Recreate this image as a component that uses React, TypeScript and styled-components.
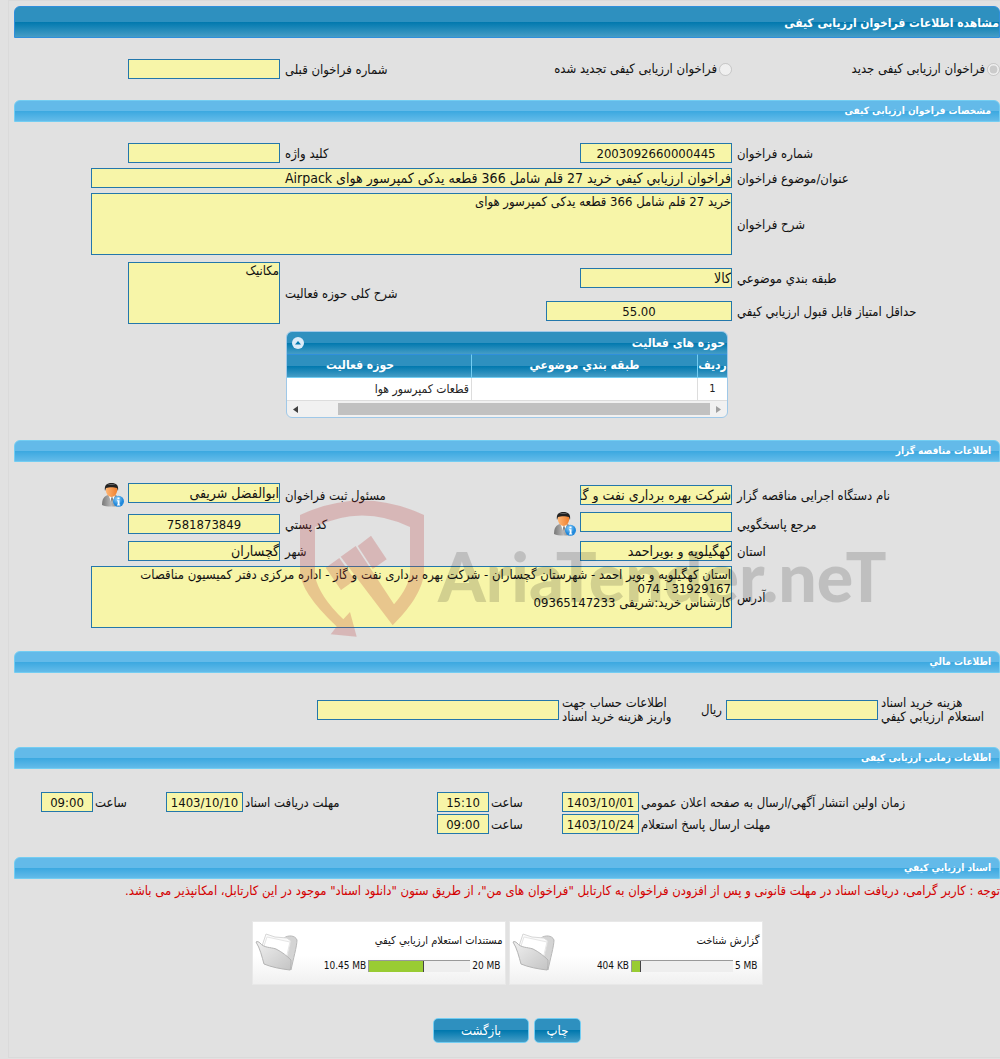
import React, { useId } from "react";
import styled, { createGlobalStyle, css } from "styled-components";

const font = `"DejaVu Sans Condensed", "DejaVu Sans", Tahoma, sans-serif`;
const darkBar = "linear-gradient(#2e90bf 0 50%, #0078ae 50%, #459dc6 100%)";
const lightBar = "linear-gradient(#63bae9 0 50%, #3ba8e0 50%, #63bbe9 100%)";

const Global = createGlobalStyle`
  *, *::before, *::after { box-sizing: border-box; }
  body { margin: 0; background: #e1e1e1; overflow-x: hidden; }
  body, input, textarea, button, table { font-family: ${font}; color: #111; }
`;

const Page = styled.main`
  direction: rtl;
  margin-left: 8px;
  padding: 5px 0 14px 5px;
  border: solid #dadada;
  border-width: 1px 0 1px 1px;
  font-size: 13px;
  line-height: 14px;
`;

const PageTitle = styled.h1`
  margin: 0;
  height: 32px;
  border: 1px solid #2f8fdc;
  border-radius: 6px 6px 0 0;
  background: ${darkBar};
  color: #fff;
  font-size: 12px;
  line-height: 32px;
`;

const SectionTitle = styled.h2`
  margin: 0;
  height: 22px;
  padding: 0 8px;
  border: 1px solid #73cdf2;
  border-radius: 6px 6px 0 0;
  background: ${lightBar};
  color: #fff;
  font-size: 10px;
  line-height: 20px;
`;

const Body = styled.section<{ $top: number; $bottom: number }>`
  position: relative;
  display: flex;
  flex-direction: column;
  gap: 5px;
  padding: ${(p) => p.$top}px 0 ${(p) => p.$bottom}px;
`;

const FormGrid = styled.div`
  display: grid;
  grid-template-columns: 268fr 152fr 300fr 152fr 114fr;
  gap: 5px 0;
  align-items: center;
`;

const MixedGrid = styled(FormGrid)`
  grid-template-rows: 31px 26px;
  margin: 2px 0;
`;

const WideGrid = styled(FormGrid)`
  grid-template-columns: 268fr 641fr 77fr;
`;

const FeeGrid = styled(FormGrid)`
  grid-template-columns: 122fr 152fr 42fr 125fr 242fr 303fr;
`;

const TimeGrid = styled(FormGrid)`
  grid-template-columns: 361fr 77fr 73fr 52fr 194fr 77fr 73fr 52fr 27fr;
  row-gap: 2px;
`;

const Label = styled.label<{ $col?: number; $gap?: number; $row?: string }>`
  grid-column: ${(p) => p.$col ?? 1};
  grid-row: ${(p) => p.$row ?? "auto"};
  padding-top: 2px;
  padding-left: ${(p) => p.$gap ?? 5}px;
  text-align: left;
  white-space: nowrap;
`;

const TwoLineLabel = styled(Label)`
  padding-top: 0;
  white-space: pre-line;
`;

const Unit = styled.span`
  padding-right: 4px;
`;

const boxed = css`
  display: block;
  width: 100%;
  margin: 0;
  border: 1px solid #2377ab;
  border-radius: 0;
  background: #f7f5a8;
  outline: 0;
`;

const TextBox = styled.input<{ $col?: string; $row?: string; $width?: number; $center?: boolean }>`
  ${boxed}
  grid-column: ${(p) => p.$col ?? "auto"};
  grid-row: ${(p) => p.$row ?? "auto"};
  ${(p) => p.$width && css`width: ${p.$width}px;`}
  height: 20px;
  padding: 0;
  font-size: ${(p) => (p.$center ? 13 : 14)}px;
  text-align: ${(p) => (p.$center ? "center" : "right")};
`;

const TextArea = styled.textarea<{ $col: string; $row?: string }>`
  ${boxed}
  grid-column: ${(p) => p.$col};
  grid-row: ${(p) => p.$row ?? "auto"};
  height: 62px;
  padding: 1px 0;
  font-size: 13px;
  line-height: 14px;
  resize: none;
  overflow: hidden;
`;

const Choice = styled.label<{ $col: number }>`
  grid-column: ${(p) => p.$col};
  display: flex;
  align-items: center;
  gap: 2px;
  min-width: 0;
  white-space: nowrap;
`;

const Radio = styled.input`
  flex: none;
  width: 13px;
  height: 13px;
  margin: 0;
`;

const PersonCell = styled.div<{ $col: number }>`
  grid-column: ${(p) => p.$col};
  position: relative;
  height: 24px;
`;

const PersonButton = styled.button`
  position: absolute;
  top: 0;
  right: calc(100% + 2px);
  width: 24px;
  height: 24px;
  padding: 0;
  border: 0;
  background: none;
`;

const Grid = styled.div`
  align-self: center;
  width: 442px;
  max-width: 100%;
  border: 1px solid #9fc8e8;
  border-radius: 6px;
  background: #f1f1f1;
  overflow: hidden;
`;

const GridTitle = styled.div`
  display: flex;
  align-items: center;
  justify-content: space-between;
  height: 22px;
  padding: 0 2px 0 5px;
  background: ${darkBar};
  color: #fff;
  font-size: 12px;
  font-weight: bold;
`;

const Collapse = styled.button`
  width: 12px;
  height: 12px;
  padding: 0;
  border: 0;
  border-radius: 50%;
  background: #dcebf8;
  line-height: 0;
`;

const TableClip = styled.div`
  overflow: hidden;
`;

const Table = styled.table`
  width: calc(100% + 38px);
  table-layout: fixed;
  border-collapse: separate;
  border-spacing: 0;
  font-size: 12px;
  th {
    height: 24px;
    padding: 0 0 2px;
    border-top: 1px solid #2f8fdc;
    border-bottom: 1px solid #73cdf2;
    background: ${darkBar};
    color: #fff;
  }
  th + th { border-right: 1px solid #73cdf2; }
  td {
    height: 23px;
    padding: 0 2px;
    border-bottom: 1px solid #ddd;
    background: #fff;
    color: #222;
  }
  td:first-child { font-size: 11px; text-align: center; }
  td + td { border-right: 1px solid #ddd; }
`;

const ScrollTrack = styled.div`
  display: flex;
  align-items: center;
  height: 16px;
  padding: 2px 0;
`;

const ScrollArrow = styled.svg`
  flex: 0 0 17px;
  height: 9px;
`;

const ScrollThumb = styled.div`
  flex: 0 1 372px;
  height: 12px;
  margin-left: auto;
  background: #c1c1c1;
`;

const Watermark = styled.svg`
  position: absolute;
  left: 286px;
  top: 38px;
  width: 610px;
  height: 140px;
  pointer-events: none;
`;

const Notice = styled.p`
  margin: 0;
  color: #d40000;
  line-height: 16px;
  white-space: nowrap;
`;

const Cards = styled.div`
  display: flex;
  justify-content: center;
  gap: 3px;
  padding-top: 17px;
`;

const Card = styled.article`
  display: flex;
  align-items: center;
  justify-content: space-between;
  width: 254px;
  height: 64px;
  padding: 0 2px;
  border: 1px solid #e8e8e8;
  background: linear-gradient(#fff 0 55%, #f0f0f0 100%);
`;

const CardText = styled.div`
  display: flex;
  flex-direction: column;
  gap: 12px;
  font-size: 11px;
`;

const Usage = styled.div`
  display: flex;
  align-items: center;
  gap: 2px;
  padding-right: 2px;
  font-size: 10px;
  line-height: 12px;
`;

const Meter = styled.div`
  direction: ltr;
  width: 102px;
  height: 12px;
  border: solid #999;
  border-width: 1px 0 0 1px;
  background: #eee;
`;

const Fill = styled.div`
  height: 100%;
  border-right: 1px solid #444;
  background: #99cc33;
`;

const Actions = styled.div`
  display: flex;
  justify-content: center;
  gap: 5px;
  padding-top: 33px;
`;

const Action = styled.button<{ $wide?: boolean }>`
  width: ${(p) => (p.$wide ? 96 : 47)}px;
  height: 25px;
  padding: 0;
  border: 1px solid #73cdf2;
  border-radius: 5px;
  background: ${darkBar};
  color: #fff;
  font-size: 13px;
`;

function PersonIcon() {
  return (
    <svg width="24" height="24" viewBox="0 0 24 24" aria-hidden="true">
      <defs>
        <linearGradient id="suit" x1="0" x2="1">
          <stop offset="0" stopColor="#777" />
          <stop offset="0.5" stopColor="#bbb" />
          <stop offset="1" stopColor="#555" />
        </linearGradient>
        <linearGradient id="face" x1="0" x2="1">
          <stop offset="0" stopColor="#ffb877" />
          <stop offset="1" stopColor="#f07f2c" />
        </linearGradient>
        <radialGradient id="info" cx="0.4" cy="0.3">
          <stop offset="0" stopColor="#8ed0fa" />
          <stop offset="1" stopColor="#2189dc" />
        </radialGradient>
      </defs>
      <path d="M0 22c0-6 2-9 6-10h7c4 1 6 4 6 10-4 2-15 2-19 0z" fill="url(#suit)" />
      <path d="M6.500 12l3.500 9 3-9z" fill="#fff" />
      <path d="M10 13l-1 3 1 6 1-6z" fill="#777" />
      <path d="M3.500 5c0 5 2.500 9 6 9s6-4 6-9c-2-3-10-3-12 0z" fill="url(#face)" />
      <path d="M3 8C2 2 5 0 9.500 0S17 2 16 8l-1-3c-3-1-8-1-11 0z" fill="#222" />
      <path d="M5 2c2-1.500 7-1.500 9 0-2-.5-7-.5-9 0z" fill="#777" />
      <circle cx="16.500" cy="18.300" r="5.500" fill="url(#info)" />
      <path d="M15.500 14.500h2v1.800h-2zM15 17.300h2.500v4.200h.7v1H15v-1h.7v-3.200H15z" fill="#fff" />
    </svg>
  );
}

function FolderIcon() {
  return (
    <svg width="44" height="40" viewBox="0 0 44 40" aria-hidden="true">
      <defs>
        <linearGradient id="folderFront" x1="0" y1="0" x2="1" y2="1">
          <stop offset="0" stopColor="#f0f0f0" />
          <stop offset="1" stopColor="#c4c4c4" />
        </linearGradient>
      </defs>
      <path d="M29 5c4-3 11-3 13 2 0 6-4 20-6 30l-4-3z" fill="#d4d4d4" stroke="#b8b8b8" />
      <path d="M7 13l4-12 9 3 12 1 4 3-4 18z" fill="#fafafa" stroke="#d8d8d8" />
      <path d="M9 13l3-9 23 5-4 17z" fill="#fff" stroke="#e6e6e6" />
      <path d="M1 9c1-1 3 0 4 1 4 5 10 4 16 6 6 3 11 7 15 11-0 4 0 8-1 10-9-1-19-3-26-6C7 24 5 15 1 9z" fill="url(#folderFront)" stroke="#b4b4b4" />
    </svg>
  );
}

function Brand() {
  return (
    <Watermark viewBox="300 500 610 140" aria-hidden="true">
      <g fill="rgb(189,60,60)" fillOpacity="0.25">
        <path d="M300 515Q362 486 424 515V570C424 590 408 610 392.700 625.300L340.700 556.700L355.700 546L394 604.300Q410 586 410 571V527Q362 504 315 527V576Q319 596 343.300 619.300L350 612L356.700 636.700L330.700 634.300L336.700 626.500Q300 592 300 571Z" />
        <path d="M357.700 546L371 535.700L386.700 559.300L372.700 569Z" />
        <path d="M325.700 567.700L339.300 558L355 580L341 590Z" />
      </g>
      <text
        x="438"
        y="602"
        direction="ltr"
        fontFamily="Lato, 'Liberation Sans', sans-serif"
        fontWeight="900"
        fontSize="68"
        fill="#000"
        fillOpacity="0.15"
      >
        AriaTender.neT
      </text>
    </Watermark>
  );
}

type FieldProps = {
  label: string;
  value?: string;
  second?: boolean;
  span?: string;
  row?: string;
  width?: number;
  center?: boolean;
};

function Field({ label, value = "", second, span, row, width, center }: FieldProps) {
  const id = useId();
  return (
    <>
      <Label htmlFor={id} $col={second ? 3 : 1} $row={row}>{label}</Label>
      <TextBox id={id} readOnly value={value} $col={span ?? (second ? "4" : "2")} $row={row} $width={width} $center={center} />
    </>
  );
}

function TallField({ label, value }: { label: string; value: string }) {
  const id = useId();
  return (
    <>
      <Label htmlFor={id} $col={3} $row="1 / 3">{label}</Label>
      <TextArea id={id} readOnly value={value} $col="4" $row="1 / 3" />
    </>
  );
}

function WideArea({ label, value }: { label: string; value: string }) {
  const id = useId();
  return (
    <WideGrid>
      <Label htmlFor={id}>{label}</Label>
      <TextArea id={id} readOnly value={value} $col="2" />
    </WideGrid>
  );
}

function PersonField({ label, value = "", second }: FieldProps) {
  const id = useId();
  return (
    <>
      <Label htmlFor={id} $col={second ? 3 : 1}>{label}</Label>
      <PersonCell $col={second ? 4 : 2}>
        <TextBox id={id} readOnly value={value} />
        <PersonButton type="button" aria-label={label}><PersonIcon /></PersonButton>
      </PersonCell>
    </>
  );
}

function Moment({ label, date, time, start = 1 }: { label: string; date: string; time: string; start?: number }) {
  const id = useId();
  return (
    <>
      <Label htmlFor={id + "d"} $col={start} $gap={2}>{label}</Label>
      <TextBox id={id + "d"} readOnly value={date} $center />
      <Label htmlFor={id + "t"} $col={start + 2} $gap={2}>ساعت</Label>
      <TextBox id={id + "t"} readOnly value={time} $center />
    </>
  );
}

function DocumentCard({ title, limit, used, percent }: { title: string; limit: string; used: string; percent: number }) {
  return (
    <Card>
      <CardText>
        <span>{title}</span>
        <Usage>
          <bdi>{limit}</bdi>
          <Meter role="progressbar" aria-label={title} aria-valuenow={percent}>
            <Fill style={{ width: `${percent}%` }} />
          </Meter>
          <bdi>{used}</bdi>
        </Usage>
      </CardText>
      <FolderIcon />
    </Card>
  );
}

export default function App() {
  return (
    <Page>
      <Global />
      <PageTitle>مشاهده اطلاعات فراخوان ارزیابی کیفی</PageTitle>
      <Body $top={21} $bottom={21}>
        <FormGrid>
          <Choice $col={1}><Radio type="radio" name="kind" disabled defaultChecked />فراخوان ارزیابی کیفی جدید</Choice>
          <Choice $col={2}><Radio type="radio" name="kind" disabled />فراخوان ارزیابی کیفی تجدید شده</Choice>
          <Field second label="شماره فراخوان قبلی" />
        </FormGrid>
      </Body>

      <SectionTitle>مشخصات فراخوان ارزیابی کیفی</SectionTitle>
      <Body $top={21} $bottom={22}>
        <FormGrid>
          <Field label="شماره فراخوان" value="2003092660000445" center />
          <Field second label="کلید واژه" />
        </FormGrid>
        <WideGrid>
          <Field label="عنوان/موضوع فراخوان" value="فراخوان ارزيابي كيفي خرید 27 قلم شامل 366 قطعه یدکی کمپرسور هوای Airpack" />
        </WideGrid>
        <WideArea label="شرح فراخوان" value="خرید 27 قلم شامل 366 قطعه یدکی کمپرسور هوای" />
        <MixedGrid>
          <TallField label="شرح کلی حوزه فعالیت" value="مکانیک" />
          <Field row="1" label="طبقه بندي موضوعي" value="کالا" />
          <Field row="2" label="حداقل امتیاز قابل قبول ارزیابي کیفي" value="55.00" span="2 / 4" width={186} center />
        </MixedGrid>
        <Grid>
          <GridTitle>
            حوزه های فعالیت
            <Collapse type="button" aria-label="بستن">
              <svg width="12" height="12" viewBox="0 0 12 12"><path d="M3 7.500L6 4l3 3.500z" fill="#0078ae" /></svg>
            </Collapse>
          </GridTitle>
          <TableClip>
            <Table>
              <colgroup><col style={{ width: 29 }} /><col style={{ width: 226 }} /><col /></colgroup>
              <thead><tr><th>ردیف</th><th>طبقه بندي موضوعي</th><th>حوزه فعالیت</th></tr></thead>
              <tbody><tr><td>1</td><td /><td>قطعات کمپرسور هوا</td></tr></tbody>
            </Table>
          </TableClip>
          <ScrollTrack>
            <ScrollArrow viewBox="0 0 17 9"><path d="M6 1v7l5-3.500z" fill="#a0a0a0" /></ScrollArrow>
            <ScrollThumb />
            <ScrollArrow viewBox="0 0 17 9"><path d="M11 1v7L6 4.500z" fill="#404040" /></ScrollArrow>
          </ScrollTrack>
        </Grid>
      </Body>

      <SectionTitle>اطلاعات مناقصه گزار</SectionTitle>
      <Body $top={21} $bottom={23}>
        <FormGrid>
          <Field label="نام دستگاه اجرایی مناقصه گزار" value="شرکت بهره برداری نفت و گاز گچساران" />
          <PersonField second label="مسئول ثبت فراخوان" value="ابوالفضل شریفی" />
          <PersonField label="مرجع پاسخگویي" />
          <Field second label="کد پستي" value="7581873849" center />
          <Field label="استان" value="کهگیلویه و بویراحمد" />
          <Field second label="شهر" value="گچساران" />
        </FormGrid>
        <WideArea
          label="آدرس"
          value={"استان کهگیلویه و بویر احمد - شهرستان گچساران - شرکت بهره برداری نفت و گاز - اداره مرکزی دفتر کمیسیون مناقصات\n31929167 - 074\nکارشناس خرید:شریفی 09365147233"}
        />
        <Brand />
      </Body>

      <SectionTitle>اطلاعات مالي</SectionTitle>
      <Body $top={23} $bottom={23}>
        <FeeGrid>
          <TwoLineLabel htmlFor="fee" $gap={3}>{"هزینه خرید اسناد\nاستعلام ارزیابي کیفي"}</TwoLineLabel>
          <TextBox id="fee" readOnly value="" />
          <Unit>ریال</Unit>
          <TwoLineLabel htmlFor="account" $col={4} $gap={3}>{"اطلاعات حساب جهت\nواریز هزینه خرید اسناد"}</TwoLineLabel>
          <TextBox id="account" readOnly value="" />
        </FeeGrid>
      </Body>

      <SectionTitle>اطلاعات زمانی ارزیابی کیفی</SectionTitle>
      <Body $top={23} $bottom={23}>
        <TimeGrid>
          <Moment label="زمان اولین انتشار آگهي/ارسال به صفحه اعلان عمومي" date="1403/10/01" time="15:10" />
          <Moment start={5} label="مهلت دریافت اسناد" date="1403/10/10" time="09:00" />
          <Moment label="مهلت ارسال پاسخ استعلام" date="1403/10/24" time="09:00" />
        </TimeGrid>
      </Body>

      <SectionTitle>اسناد ارزیابي کیفي</SectionTitle>
      <Body $top={4} $bottom={0}>
        <Notice>توجه : کاربر گرامی، دریافت اسناد در مهلت قانونی و پس از افزودن فراخوان به کارتابل "فراخوان های من"، از طریق ستون "دانلود اسناد" موجود در این کارتابل، امکانپذیر می باشد.</Notice>
        <Cards>
          <DocumentCard title="گزارش شناخت" limit="5 MB" used="404 KB" percent={9} />
          <DocumentCard title="مستندات استعلام ارزیابي کیفي" limit="20 MB" used="10.45 MB" percent={54} />
        </Cards>
      </Body>
      <Actions>
        <Action type="button">چاپ</Action>
        <Action type="button" $wide>بازگشت</Action>
      </Actions>
    </Page>
  );
}
